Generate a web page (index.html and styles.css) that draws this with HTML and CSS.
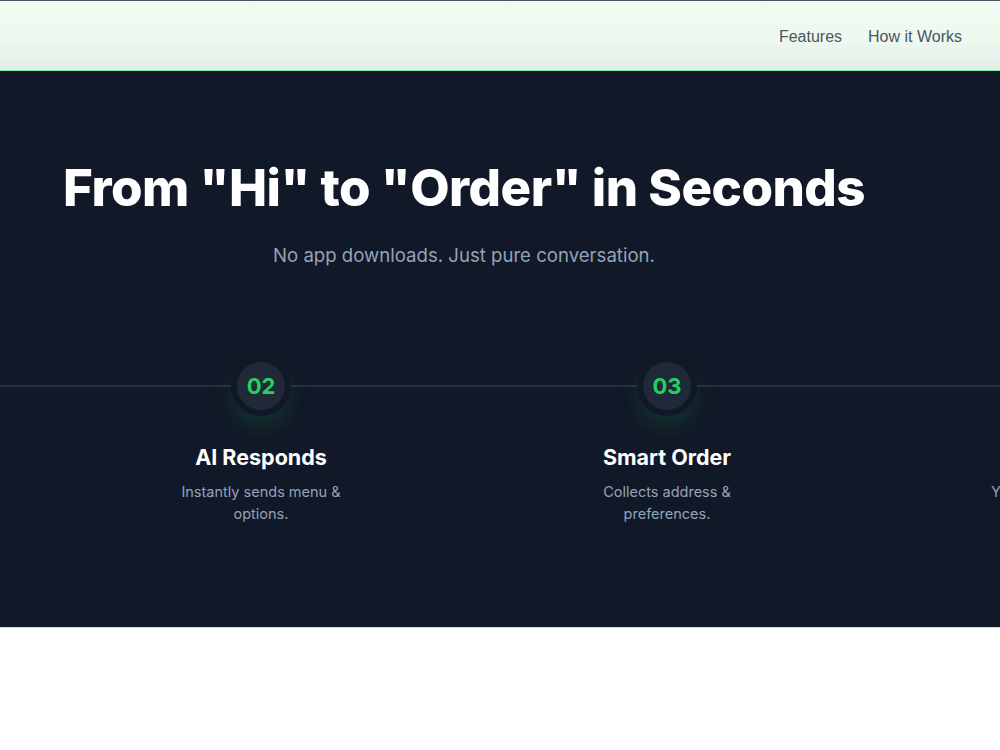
FILE: index.html
```html
<!DOCTYPE html>
<html lang="en">
<head>
<meta charset="utf-8">
<title>From Hi to Order</title>
<link rel="stylesheet" href="styles.css">
</head>
<body>
<header class="nav">
  <nav class="nav-links">
    <a href="#features">Features</a>
    <a href="#how">How it Works</a>
  </nav>
</header>
<section class="hero" id="how">
  <div class="hero-inner">
    <h1 class="hero-title">From "Hi" to "Order" in Seconds</h1>
    <p class="hero-sub">No app downloads. Just pure conversation.</p>
  </div>
  <div class="steps">
    <div class="step">
      <div class="step-num">01</div>
      <h3 class="step-title">Customer Says Hi</h3>
      <p class="step-desc">Starts a chat on WhatsApp.</p>
    </div>
    <div class="step">
      <div class="step-num">02</div>
      <h3 class="step-title">AI Responds</h3>
      <p class="step-desc">Instantly sends menu &amp;<br>options.</p>
    </div>
    <div class="step">
      <div class="step-num">03</div>
      <h3 class="step-title">Smart Order</h3>
      <p class="step-desc">Collects address &amp;<br>preferences.</p>
    </div>
    <div class="step">
      <div class="step-num">04</div>
      <h3 class="step-title">Confirmed</h3>
      <p class="step-desc">Your order is on its way.</p>
    </div>
  </div>
</section>
<section class="after"></section>
</body>
</html>
```
FILE: styles.css
```css
* { box-sizing: border-box; }
html, body { margin: 0; padding: 0; }
body {
  font-family: Inter, "Liberation Sans", Arial, sans-serif;
  background: #ffffff;
  overflow: hidden;
  width: 1000px;
}
.nav {
  height: 71px;
  border-top: 1px solid #4b5563;
  border-bottom: 1px solid #86efac;
  background: linear-gradient(180deg, #effcf1 0%, #eef9f0 55%, #e1ede6 100%);
  display: flex;
  justify-content: flex-end;
  align-items: center;
  padding-right: 38px;
  padding-top: 2px;
}
.nav-links { display: flex; gap: 26px; }
.nav-links a {
  font-family: "Liberation Sans", Arial, sans-serif;
  font-size: 16px;
  color: #4b5563;
  text-decoration: none;
}
.hero {
  background: #111827;
  height: 557px;
  overflow: hidden;
  border-bottom: 1px solid #d6d4e3;
}
.hero-inner {
  width: 928px;
  text-align: center;
  padding-top: 89px;
}
.hero-title {
  margin: 0;
  font-size: 51px;
  font-weight: 800;
  line-height: 56px;
  color: #ffffff;
  letter-spacing: -0.5px;
  white-space: nowrap;
}
.hero-sub {
  margin: 26px 0 0;
  font-size: 18.6px;
  line-height: 26px;
  color: #94a3b8;
}
.steps {
  display: flex;
  margin-top: 91px;
  margin-left: -348px;
  width: 1624px;
  background-image: linear-gradient(#273041, #273041);
  background-size: 100% 2px;
  background-position: 0 26px;
  background-repeat: no-repeat;
}
.step {
  flex: 0 0 406px;
  display: flex;
  flex-direction: column;
  align-items: center;
  text-align: center;
}
.step-num {
  width: 54px;
  height: 54px;
  border-radius: 50%;
  background: #1f2937;
  border: 3px solid #111827;
  display: flex;
  align-items: center;
  justify-content: center;
  color: #22d162;
  font-weight: 700;
  font-size: 22px;
  box-shadow: 0 0 0 3px #111827, 0 12px 24px rgba(34, 197, 94, 0.18);
}
.step-title {
  margin: 31px 0 0;
  font-size: 21.5px;
  font-weight: 700;
  color: #ffffff;
  line-height: 26px;
}
.step-desc {
  margin: 11px 0 0;
  font-size: 14.5px;
  line-height: 22px;
  color: #94a3b8;
}
.after {
  height: 130px;
  background: #ffffff;
}
```
